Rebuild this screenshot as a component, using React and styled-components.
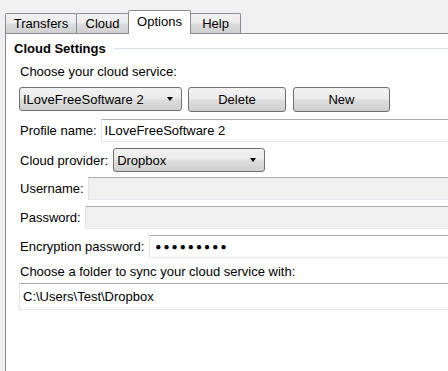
import React from 'react';
import styled, { createGlobalStyle } from 'styled-components';

const GlobalStyle = createGlobalStyle`
  html, body {
    margin: 0;
    padding: 0;
    background: #f0f0f0;
    overflow: hidden;
  }
  body {
    font-family: 'Liberation Sans', Arial, sans-serif;
    font-size: 13px;
    color: #000;
  }
`;

const Window = styled.div`
  width: 448px;
  height: 371px;
  overflow: hidden;
`;

const TabStrip = styled.div`
  display: flex;
  align-items: flex-end;
  padding: 10px 0 0 5px;
`;

const Tab = styled.div`
  width: ${p => p.$w}px;
  height: ${p => (p.$active ? 24 : 20)}px;
  margin-left: ${p => (p.$first ? 0 : -1)}px;
  margin-bottom: ${p => (p.$active ? -1 : 0)}px;
  box-sizing: border-box;
  border: 1px solid #898c95;
  border-bottom: none;
  border-radius: 2px 2px 0 0;
  position: relative;
  z-index: ${p => (p.$active ? 2 : 1)};
  background: ${p =>
    p.$active
      ? '#fff'
      : 'linear-gradient(#f2f2f2 0%, #ebebeb 45%, #dddddd 55%, #cfcfcf 100%)'};
  display: flex;
  align-items: center;
  justify-content: center;
  padding-bottom: ${p => (p.$active ? 2 : 0)}px;
  line-height: 15px;
`;

const Panel = styled.div`
  margin-left: 5px;
  width: 600px;
  height: 400px;
  box-sizing: border-box;
  border: 1px solid #898c95;
  background: #fff;
  position: relative;
  z-index: 1;
`;

const GroupHeader = styled.div`
  display: flex;
  align-items: center;
  padding: 7px 0 0 8px;
  height: 15px;
`;

const GroupTitle = styled.span`
  font-weight: bold;
  line-height: 15px;
`;

const GroupLine = styled.div`
  flex: 1;
  height: 1px;
  margin-left: 8px;
  background: #d5dfe5;
`;

const Body = styled.div`
  padding-left: 13px;
  display: flex;
  flex-direction: column;
`;

const Label = styled.div`
  margin-top: ${p => p.$mt || 0}px;
  padding-left: 1px;
  line-height: 16px;
  white-space: nowrap;
`;

const Row = styled.div`
  display: flex;
  align-items: ${p => p.$align || 'center'};
  gap: ${p => p.$gap || 4}px;
  margin-top: ${p => p.$mt || 0}px;
`;

const RowLabel = styled.span`
  white-space: nowrap;
  padding-left: 1px;
`;

const Combo = styled.div`
  width: ${p => p.$w}px;
  height: 24px;
  box-sizing: border-box;
  border: 1px solid #707070;
  border-radius: 3px;
  background: linear-gradient(#f2f2f2 0%, #ebebeb 45%, #dddddd 55%, #cfcfcf 100%);
  display: flex;
  align-items: center;
  padding: 0 4px 0 3px;
`;

const ComboText = styled.span`
  flex: 1;
  white-space: nowrap;
`;

const Arrow = styled.span`
  width: 0;
  height: 0;
  border-left: 3.5px solid transparent;
  border-right: 3.5px solid transparent;
  border-top: 4px solid #000;
  margin-right: 4px;
`;

const Button = styled.div`
  width: ${p => p.$w}px;
  height: 25px;
  margin-left: ${p => p.$ml || 0}px;
  box-sizing: border-box;
  border: 1px solid #707070;
  border-radius: 3px;
  background: linear-gradient(#f2f2f2 0%, #ebebeb 45%, #dddddd 55%, #cfcfcf 100%);
  display: flex;
  align-items: center;
  justify-content: center;
`;

const TextBox = styled.div`
  flex: 1;
  height: ${p => p.$h || 23}px;
  box-sizing: border-box;
  border: 1px solid #e3e9ef;
  border-top-color: #abadb3;
  border-left-color: #e2e3ea;
  background: ${p => (p.$disabled ? '#f0f0f0' : '#fff')};
  display: flex;
  align-items: center;
  padding-left: 3px;
  white-space: nowrap;
`;

const Dots = styled.span`
  font-size: 10px;
  letter-spacing: 2.1px;
  padding-left: 2px;
`;

const tabs = [
  { label: 'Transfers', w: 72 },
  { label: 'Cloud', w: 53 },
  { label: 'Options', w: 63, active: true },
  { label: 'Help', w: 51 },
];

export default function App() {
  return (
    <Window>
      <GlobalStyle />
      <TabStrip>
        {tabs.map((t, i) => (
          <Tab key={t.label} $w={t.w} $active={t.active} $first={i === 0}>
            {t.label}
          </Tab>
        ))}
      </TabStrip>
      <Panel>
        <GroupHeader>
          <GroupTitle>Cloud Settings</GroupTitle>
          <GroupLine />
        </GroupHeader>
        <Body>
          <Label $mt={8}>Choose your cloud service:</Label>
          <Row $mt={7} $align="flex-start" $gap={6}>
            <Combo $w={163}>
              <ComboText>ILoveFreeSoftware 2</ComboText>
              <Arrow />
            </Combo>
            <Button $w={98}>Delete</Button>
            <Button $w={97} $ml={1}>New</Button>
          </Row>
          <Row $mt={7}>
            <RowLabel>Profile name:</RowLabel>
            <TextBox>ILoveFreeSoftware 2</TextBox>
          </Row>
          <Row $mt={6} $gap={5}>
            <RowLabel>Cloud provider:</RowLabel>
            <Combo $w={152}>
              <ComboText>Dropbox</ComboText>
              <Arrow />
            </Combo>
          </Row>
          <Row $mt={5}>
            <RowLabel>Username:</RowLabel>
            <TextBox $disabled />
          </Row>
          <Row $mt={6}>
            <RowLabel>Password:</RowLabel>
            <TextBox $disabled />
          </Row>
          <Row $mt={6} $gap={5}>
            <RowLabel>Encryption password:</RowLabel>
            <TextBox>
              <Dots>●●●●●●●●●</Dots>
            </TextBox>
          </Row>
          <Label $mt={6}>Choose a folder to sync your cloud service with:</Label>
          <Row $mt={3}>
            <TextBox $h={27}>C:\Users\Test\Dropbox</TextBox>
          </Row>
        </Body>
      </Panel>
    </Window>
  );
}
